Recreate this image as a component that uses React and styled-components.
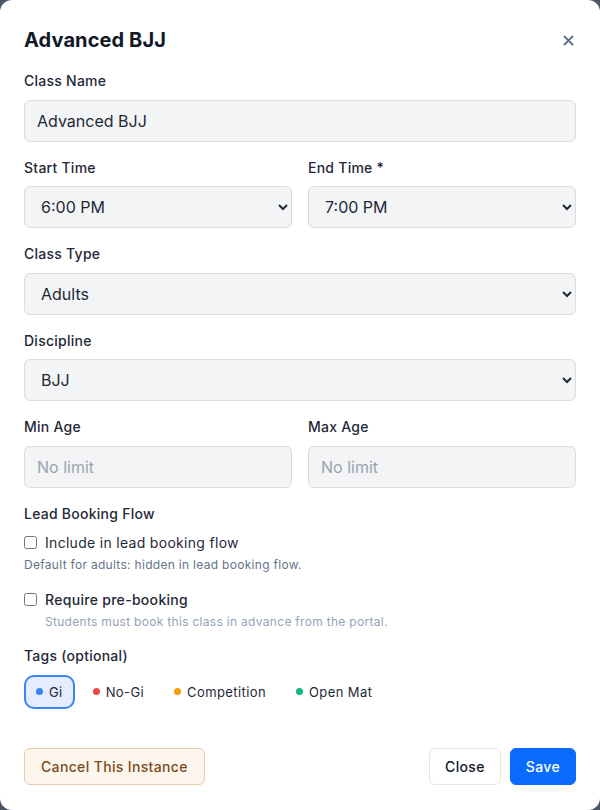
import React, { useState } from 'react'
import styled, { createGlobalStyle } from 'styled-components'

const Global = createGlobalStyle`
  html, body {
    margin: 0;
    padding: 0;
    background: #4b5563;
    font-family: Inter, "Open Sans", sans-serif;
  }
  * { box-sizing: border-box; }
`

const Modal = styled.div`
  width: 600px;
  height: 810px;
  background: #ffffff;
  border-radius: 12px;
  padding: 24px 24px 25px;
  display: flex;
  flex-direction: column;
`

const Header = styled.div`
  display: flex;
  align-items: center;
  justify-content: space-between;
  height: 32px;
  margin-bottom: 15px;
`

const Title = styled.h2`
  margin: 0;
  font-size: 20px;
  font-weight: 700;
  color: #111827;
  letter-spacing: 0.1px;
`

const CloseX = styled.button`
  border: none;
  background: none;
  padding: 0;
  width: 16px;
  height: 16px;
  display: flex;
  align-items: center;
  justify-content: center;
  color: #64748b;
  cursor: pointer;
`

const Form = styled.div`
  display: flex;
  flex-direction: column;
  gap: 16px;
`

const Row = styled.div`
  display: grid;
  grid-template-columns: 1fr 1fr;
  gap: 16px;
`

const Field = styled.div`
  display: flex;
  flex-direction: column;
  gap: 8px;
`

const Label = styled.label`
  font-size: 14px;
  line-height: 20.5px;
  font-weight: 500;
  color: #1f2937;
  letter-spacing: 0.25px;
`

const Input = styled.input`
  height: 42px;
  width: 100%;
  padding: 0 12px;
  font-family: inherit;
  font-size: 16px;
  color: #1f2937;
  background: #f3f4f6;
  border: 1px solid #d9dce1;
  border-radius: 6px;
  outline: none;
  &::placeholder { color: #9ca3af; }
`

const Select = styled.select`
  height: 42px;
  width: 100%;
  padding: 0 8px 0 12px;
  font-family: inherit;
  font-size: 16px;
  color: #1f2937;
  background: #f3f4f6;
  border: 1px solid #d9dce1;
  border-radius: 6px;
  outline: none;
`

const Check = styled.label`
  display: flex;
  align-items: center;
  gap: 8px;
  height: 20px;
  font-size: 14px;
  letter-spacing: 0.3px;
  font-weight: ${p => (p.$strong ? 500 : 400)};
  color: #1f2937;
  input { margin: 0; width: 13px; height: 13px; }
`

const CheckGroup = styled.div`
  display: flex;
  flex-direction: column;
  gap: 5px;
`

const Help = styled.div`
  font-size: 12px;
  line-height: 16px;
  letter-spacing: 0.3px;
  color: ${p => (p.$light ? '#94a3b8' : '#64748b')};
  padding-left: ${p => (p.$indent ? '21px' : '0')};
`

const Tags = styled.div`
  display: flex;
  gap: 6px;
`

const Tag = styled.button`
  display: flex;
  align-items: center;
  gap: 6px;
  height: 34px;
  padding: 0 10px;
  font-family: inherit;
  font-size: 13px;
  letter-spacing: 0.4px;
  color: #1f2937;
  border-radius: 10px;
  border: 2px solid ${p => (p.$on ? '#3b82f6' : 'transparent')};
  background: ${p => (p.$on ? '#e3edfd' : 'transparent')};
  cursor: pointer;
`

const Dot = styled.span`
  width: 7px;
  height: 7px;
  border-radius: 50%;
  background: ${p => p.$color};
`

const Footer = styled.div`
  margin-top: auto;
  display: flex;
  align-items: center;
  justify-content: space-between;
`

const Actions = styled.div`
  display: flex;
  gap: 9px;
`

const Button = styled.button`
  height: 37px;
  padding: 0 ${p => (p.$narrow ? '15px' : '16px')};
  font-family: inherit;
  font-size: 14px;
  font-weight: 500;
  letter-spacing: 0.35px;
  border-radius: 6px;
  cursor: pointer;
  color: ${p => p.$fg};
  background: ${p => p.$bg};
  border: 1px solid ${p => p.$bd};
`

const tags = [
  { name: 'Gi', color: '#3b82f6' },
  { name: 'No-Gi', color: '#ef4444' },
  { name: 'Competition', color: '#f59e0b' },
  { name: 'Open Mat', color: '#10b981' },
]

const times = ['5:00 PM', '5:30 PM', '6:00 PM', '6:30 PM', '7:00 PM', '7:30 PM']

export default function App() {
  const [active, setActive] = useState(['Gi'])

  const toggle = name =>
    setActive(a => (a.includes(name) ? a.filter(t => t !== name) : [...a, name]))

  return (
    <>
      <Global />
      <Modal>
        <Header>
          <Title>Advanced BJJ</Title>
          <CloseX aria-label="Close">
            <svg width="11" height="11" viewBox="0 0 11 11">
              <path d="M1.5 1.5l8 8M9.5 1.5l-8 8" stroke="currentColor" strokeWidth="2" strokeLinecap="round" />
            </svg>
          </CloseX>
        </Header>

        <Form>
          <Field>
            <Label>Class Name</Label>
            <Input defaultValue="Advanced BJJ" />
          </Field>

          <Row>
            <Field>
              <Label>Start Time</Label>
              <Select defaultValue="6:00 PM">
                {times.map(t => <option key={t}>{t}</option>)}
              </Select>
            </Field>
            <Field>
              <Label>End Time *</Label>
              <Select defaultValue="7:00 PM">
                {times.map(t => <option key={t}>{t}</option>)}
              </Select>
            </Field>
          </Row>

          <Field>
            <Label>Class Type</Label>
            <Select defaultValue="Adults">
              <option>Adults</option>
              <option>Kids</option>
            </Select>
          </Field>

          <Field>
            <Label>Discipline</Label>
            <Select defaultValue="BJJ">
              <option>BJJ</option>
              <option>Muay Thai</option>
            </Select>
          </Field>

          <Row>
            <Field>
              <Label>Min Age</Label>
              <Input placeholder="No limit" />
            </Field>
            <Field>
              <Label>Max Age</Label>
              <Input placeholder="No limit" />
            </Field>
          </Row>

          <Field>
            <Label>Lead Booking Flow</Label>
            <CheckGroup>
              <Check>
                <input type="checkbox" />
                Include in lead booking flow
              </Check>
              <Help>Default for adults: hidden in lead booking flow.</Help>
            </CheckGroup>
          </Field>

          <CheckGroup>
            <Check $strong>
              <input type="checkbox" />
              Require pre-booking
            </Check>
            <Help $light $indent>Students must book this class in advance from the portal.</Help>
          </CheckGroup>

          <Field>
            <Label>Tags (optional)</Label>
            <Tags>
              {tags.map(t => (
                <Tag key={t.name} $on={active.includes(t.name)} onClick={() => toggle(t.name)}>
                  <Dot $color={t.color} />
                  {t.name}
                </Tag>
              ))}
            </Tags>
          </Field>
        </Form>

        <Footer>
          <Button $fg="#7c4a1e" $bg="#fdf6ec" $bd="#e6cba9">Cancel This Instance</Button>
          <Actions>
            <Button $narrow $fg="#111827" $bg="#ffffff" $bd="#e5e7eb">Close</Button>
            <Button $narrow $fg="#ffffff" $bg="#0a6cff" $bd="#0a6cff">Save</Button>
          </Actions>
        </Footer>
      </Modal>
    </>
  )
}
